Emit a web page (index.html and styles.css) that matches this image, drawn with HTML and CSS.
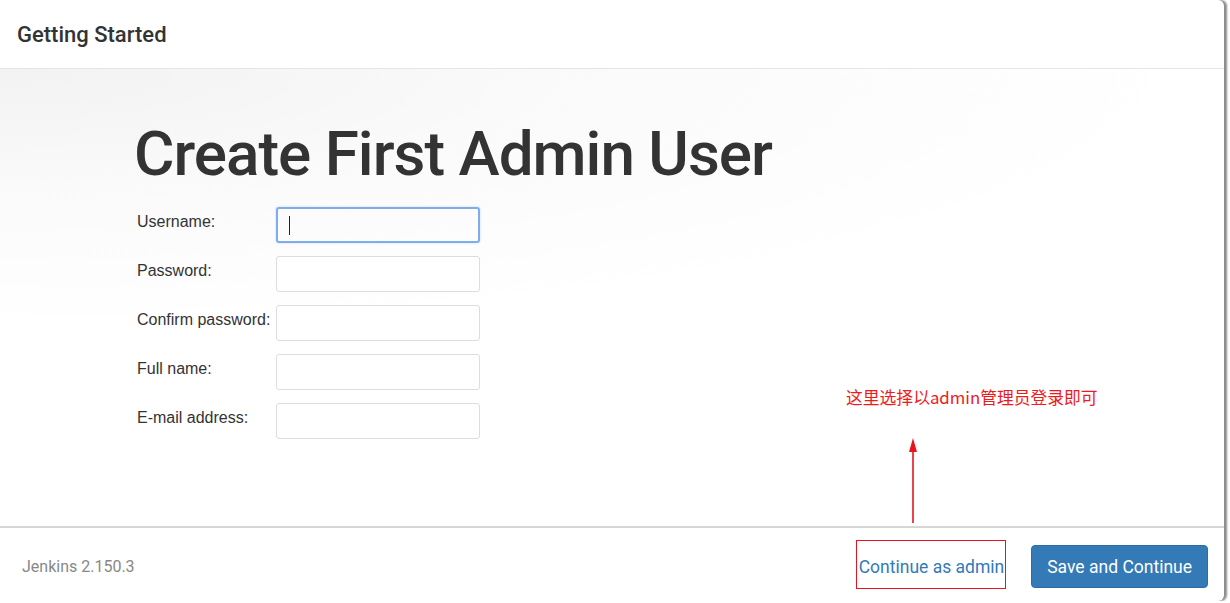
FILE: index.html
```html
<!DOCTYPE html>
<html lang="en">
<head>
  <meta charset="UTF-8">
  <title>Getting Started</title>
  <link rel="stylesheet" href="styles.css">
</head>
<body>

  <div class="dialog">
    <div class="dialog-header">
      <h4>Getting Started</h4>
    </div>

    <div class="dialog-body">
      <h1>Create First Admin User</h1>

      <form class="admin-form">
        <label for="username">Username:</label>
        <input type="text" id="username" class="focused">

        <label for="password1">Password:</label>
        <input type="password" id="password1">

        <label for="password2">Confirm password:</label>
        <input type="password" id="password2">

        <label for="fullname">Full name:</label>
        <input type="text" id="fullname">

        <label for="email">E-mail address:</label>
        <input type="text" id="email">
      </form>
    </div>

    <div class="dialog-footer">
      <span class="version">Jenkins 2.150.3</span>
      <div class="actions">
        <a href="#" class="skip-link">Continue as admin</a>
        <button type="button" class="btn-primary">Save and Continue</button>
      </div>
    </div>

    <!-- annotation drawn on top of the screenshot -->
    <div class="note">这里选择以admin管理员登录即可</div>
    <svg class="note-arrow" width="12" height="86" viewBox="0 0 12 86">
      <path d="M6 85 L6 12" stroke="#e8141c" stroke-width="1.6"/>
      <path d="M6 0 L10 14 L2 14 Z" fill="#e8141c"/>
    </svg>
    <div class="note-box"></div>
  </div>

</body>
</html>
```

FILE: styles.css
```css
body {
  margin: 0;
  background-color: #fff;
  font-family: Roboto, "Noto Sans", sans-serif;
  color: #333;
}

.dialog {
  position: relative;
  width: 1224px;
  height: 601px;
  display: flex;
  flex-direction: column;
  background-color: #fff;
  border-radius: 0 6px 6px 0;
  box-shadow: 3px 0 2px rgba(0, 0, 0, 0.45);
  overflow: hidden;
}

.dialog-header {
  height: 68px;
  border-bottom: 1px solid #e5e5e5;
  padding: 0 17px;
  display: flex;
  align-items: center;
}

.dialog-header h4 {
  margin: 0;
  font-size: 22px;
  font-weight: 500;
  color: #333;
}

.dialog-body {
  flex: 1;
  padding: 0 0 0 134px;
  background: radial-gradient(ellipse 1200px 260px at 0 0, #f2f2f2 0%, #fafafa 45%, #fff 100%);
}

.dialog-body h1 {
  margin: 50px 0 18px;
  font-size: 62px;
  font-weight: 500;
  letter-spacing: -1px;
  line-height: 70px;
  color: #333;
}

.admin-form {
  display: grid;
  grid-template-columns: 139px 204px;
  row-gap: 13px;
  padding-left: 3px;
  font-family: "Liberation Sans", Arial, sans-serif;
  font-size: 16px;
}

.admin-form label {
  padding-top: 6px;
  color: #333;
  white-space: nowrap;
}

.admin-form input {
  box-sizing: border-box;
  width: 204px;
  height: 36px;
  border: 1px solid #ddd;
  border-radius: 3px;
  padding: 4px 12px;
  font-size: 15px;
  outline: none;
}

.admin-form input.focused {
  border: 2px solid #7fadea;
  box-shadow: 0 0 2px rgba(102, 175, 233, 0.5);
  background: linear-gradient(#222, #222) 11px 7px / 1px 19px no-repeat;
}

.dialog-footer {
  height: 73px;
  border-top: 2px solid #d6d6d6;
  display: flex;
  align-items: center;
  justify-content: space-between;
  padding: 0 16px 0 22px;
}

.version {
  font-size: 16px;
  color: #888;
  padding-top: 4px;
}

.actions {
  display: flex;
  align-items: center;
  gap: 27px;
  padding-top: 4px;
}

.skip-link {
  font-size: 17.5px;
  color: #337ab7;
  text-decoration: none;
}

.btn-primary {
  height: 43px;
  padding: 0 15px;
  font-family: Roboto, sans-serif;
  font-size: 17.5px;
  color: #fff;
  background-color: #337ab7;
  border: 1px solid #2e6da4;
  border-radius: 4px;
}

/* annotation layer */
.note {
  position: absolute;
  left: 846px;
  top: 385px;
  font-family: "Noto Sans CJK SC", "Microsoft YaHei", sans-serif;
  font-size: 16.8px;
  color: #f01a1a;
}

.note-arrow {
  position: absolute;
  left: 907px;
  top: 438px;
}

.note-box {
  position: absolute;
  left: 856px;
  top: 540px;
  width: 148px;
  height: 47px;
  border: 1px solid #e8141c;
}
```
